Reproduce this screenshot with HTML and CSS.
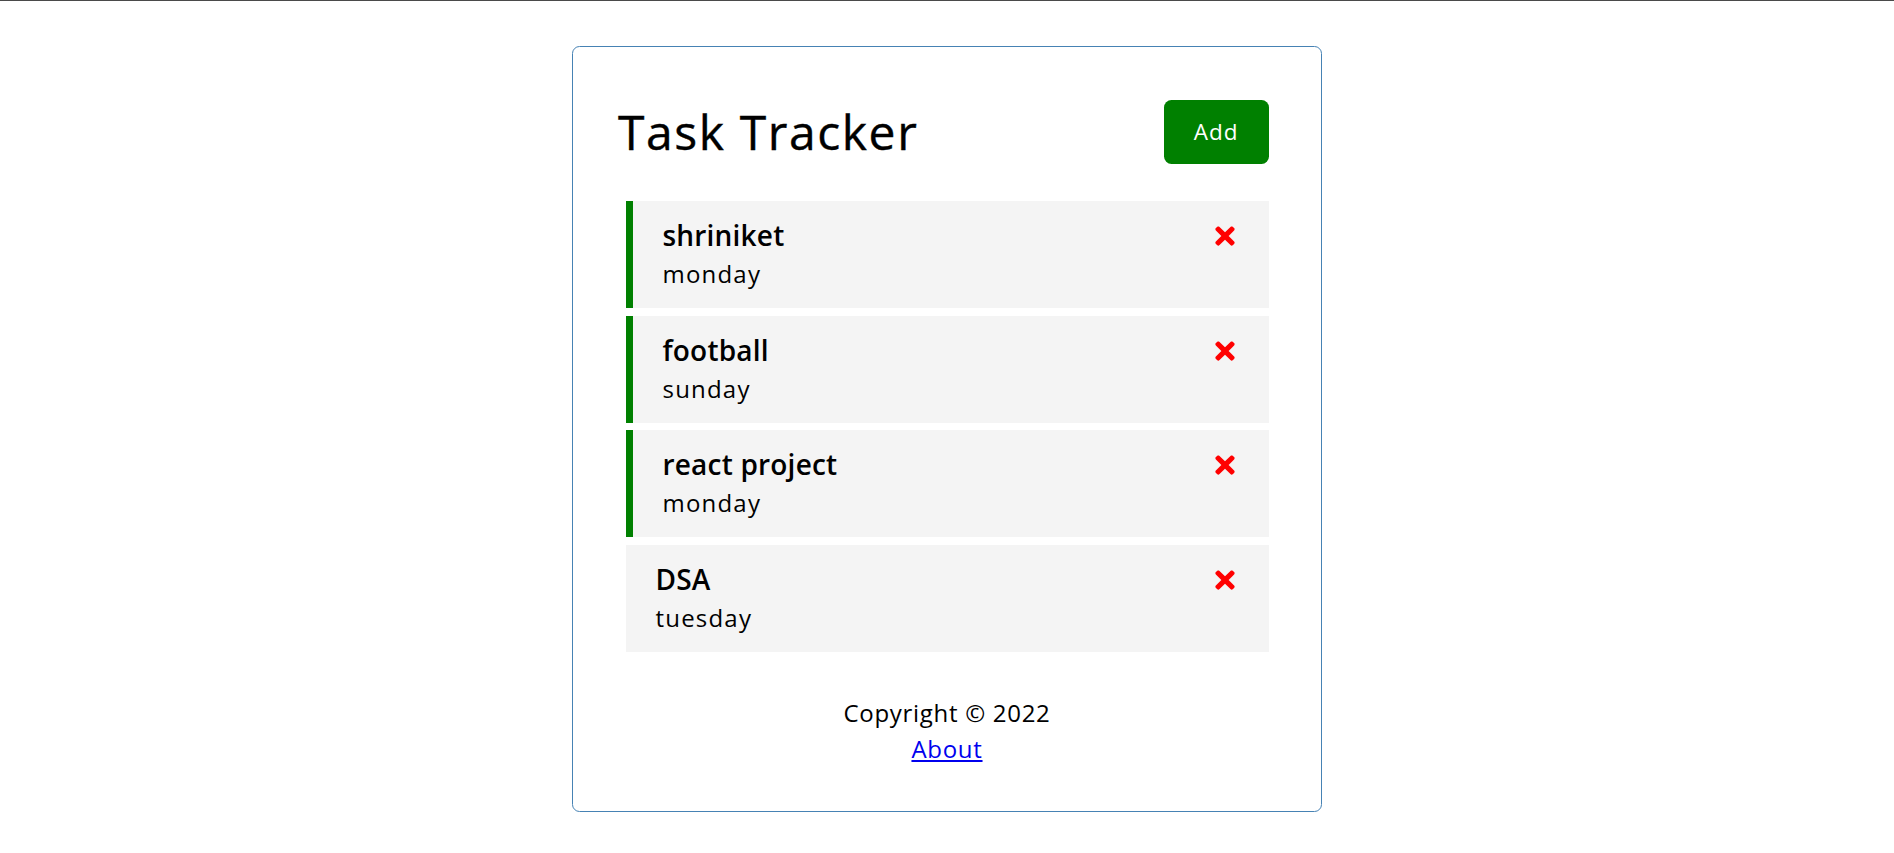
FILE: index.html
```html
<!DOCTYPE html>
<html lang="en">
<head>
<meta charset="utf-8">
<title>Task Tracker</title>
<link rel="stylesheet" href="styles.css">
</head>
<body>
<div class="topline"></div>
<div class="container">
  <header class="header">
    <h1 class="title">Task Tracker</h1>
    <button class="btn">Add</button>
  </header>
  <div class="tasks">
    <div class="task reminder">
      <h3 class="task-title">shriniket
        <svg class="del" viewBox="0 0 352 512" width="1em" height="1em"><path d="M242.72 256l100.07-100.07c12.28-12.28 12.28-32.19 0-44.48l-22.24-22.240c-12.28-12.28-32.19-12.28-44.48 0L176 189.28 75.93 89.21c-12.28-12.28-32.19-12.28-44.48 0L9.21 111.45c-12.28 12.28-12.28 32.19 0 44.48L109.28 256 9.21 356.07c-12.28 12.28-12.28 32.19 0 44.48l22.24 22.24c12.28 12.28 32.2 12.28 44.48 0L176 322.72l100.07 100.07c12.28 12.28 32.2 12.28 44.48 0l22.24-22.24c12.28-12.28 12.28-32.19 0-44.48L242.72 256z"/></svg>
      </h3>
      <p class="task-day">monday</p>
    </div>
    <div class="task reminder">
      <h3 class="task-title">football
        <svg class="del" viewBox="0 0 352 512" width="1em" height="1em"><path d="M242.72 256l100.07-100.07c12.28-12.28 12.28-32.19 0-44.48l-22.24-22.24c-12.28-12.28-32.19-12.28-44.48 0L176 189.28 75.93 89.21c-12.28-12.28-32.19-12.28-44.48 0L9.21 111.45c-12.28 12.28-12.28 32.19 0 44.48L109.28 256 9.21 356.07c-12.28 12.28-12.28 32.19 0 44.48l22.24 22.24c12.28 12.28 32.2 12.28 44.48 0L176 322.72l100.07 100.07c12.28 12.28 32.2 12.28 44.48 0l22.24-22.24c12.28-12.28 12.28-32.19 0-44.48L242.72 256z"/></svg>
      </h3>
      <p class="task-day">sunday</p>
    </div>
    <div class="task reminder">
      <h3 class="task-title">react project
        <svg class="del" viewBox="0 0 352 512" width="1em" height="1em"><path d="M242.72 256l100.07-100.07c12.28-12.28 12.28-32.19 0-44.48l-22.24-22.24c-12.28-12.28-32.19-12.28-44.48 0L176 189.28 75.93 89.21c-12.28-12.28-32.19-12.28-44.48 0L9.21 111.45c-12.28 12.28-12.28 32.19 0 44.48L109.28 256 9.21 356.07c-12.28 12.28-12.28 32.19 0 44.48l22.24 22.24c12.28 12.28 32.2 12.28 44.48 0L176 322.72l100.07 100.07c12.28 12.28 32.2 12.28 44.48 0l22.24-22.24c12.28-12.28 12.28-32.19 0-44.48L242.72 256z"/></svg>
      </h3>
      <p class="task-day">monday</p>
    </div>
    <div class="task">
      <h3 class="task-title">DSA
        <svg class="del" viewBox="0 0 352 512" width="1em" height="1em"><path d="M242.72 256l100.07-100.07c12.28-12.28 12.28-32.19 0-44.48l-22.24-22.24c-12.28-12.28-32.19-12.28-44.48 0L176 189.28 75.93 89.21c-12.28-12.28-32.19-12.28-44.48 0L9.21 111.45c-12.28 12.28-12.28 32.19 0 44.48L109.28 256 9.21 356.07c-12.28 12.28-12.28 32.19 0 44.48l22.24 22.24c12.28 12.28 32.2 12.28 44.48 0L176 322.72l100.07 100.07c12.28 12.28 32.2 12.28 44.48 0l22.24-22.24c12.28-12.28 12.28-32.19 0-44.48L242.72 256z"/></svg>
      </h3>
      <p class="task-day">tuesday</p>
    </div>
  </div>
  <footer class="footer">
    <p class="copy">Copyright &copy; 2022</p>
    <a class="about" href="#">About</a>
  </footer>
</div>
</body>
</html>
```
FILE: styles.css
```css
* {
  box-sizing: border-box;
  margin: 0;
  padding: 0;
}

body {
  font-family: "Open Sans", "Noto Sans", sans-serif;
  font-size: 24px;
  line-height: 36px;
  color: #000;
  background: #fff;
}

.topline {
  height: 1px;
  background: #4a4a4a;
}

.container {
  max-width: 750px;
  margin: 45px auto 0;
  border: 1px solid steelblue;
  border-radius: 7.5px;
  padding: 45px 45px 44px;
}

.header {
  display: flex;
  justify-content: space-between;
  align-items: center;
  margin-bottom: 30px;
}

.title {
  font-size: 48px;
  line-height: 72px;
  font-weight: 400;
  letter-spacing: 1.6px;
  -webkit-text-stroke: 0.4px #000;
}

.btn {
  display: inline-block;
  background: green;
  color: #fff;
  border: none;
  padding: 15px 30px;
  margin: 7.5px;
  border-radius: 7.5px;
  font-family: inherit;
  font-size: 22.5px;
  line-height: 34px;
  letter-spacing: 1px;
  cursor: pointer;
}

.task {
  background: #f4f4f4;
  margin: 7.5px;
  padding: 14px 30px 16px;
  cursor: pointer;
}

.task.reminder {
  border-left: 7.5px solid green;
}

.task-title {
  display: flex;
  align-items: center;
  justify-content: space-between;
  font-size: 28px;
  line-height: 40px;
  font-weight: 600;
  letter-spacing: 0.2px;
}

.del {
  fill: red;
  flex-shrink: 0;
  position: relative;
  top: 1px;
}

.task-day {
  font-size: 24px;
  line-height: 37px;
  letter-spacing: 1.2px;
}

.footer {
  margin-top: 43px;
  text-align: center;
  letter-spacing: 0.7px;
}

.about {
  color: #0000ee;
  text-decoration: underline;
}
```
